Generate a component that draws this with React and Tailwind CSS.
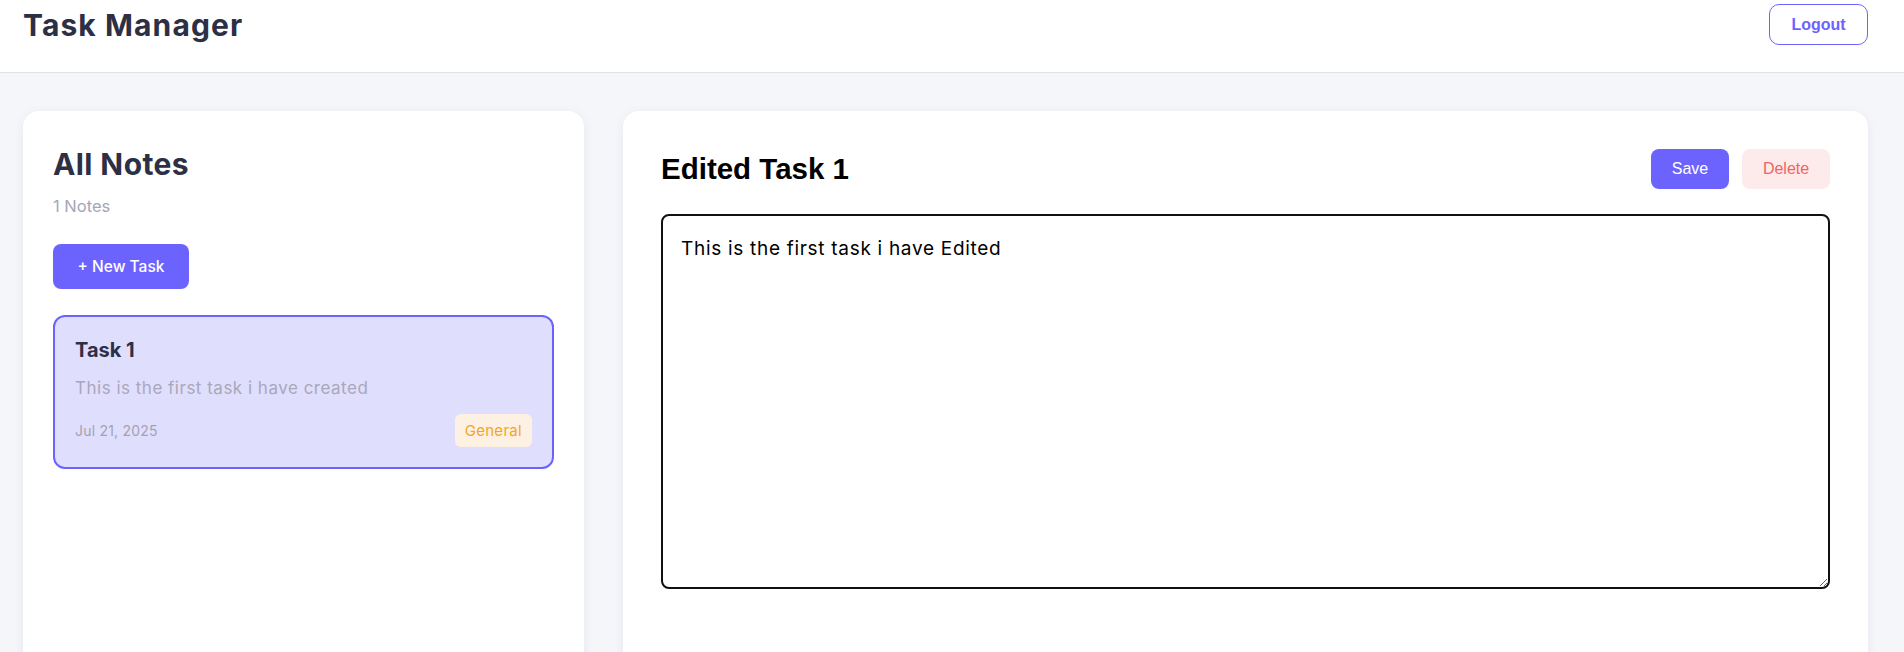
import React from "react";

const sans = "font-['Inter','Noto_Sans',sans-serif]";
const arial = "font-['Liberation_Sans',Arial,sans-serif]";

const NoteCard = ({ title, body, date, tag }) => {
  return (
    <div className="rounded-xl border-2 border-[#6c63ff] bg-[#e0defd] px-5 pt-[18px] pb-[20px]">
      <h3 className="text-[20px] leading-[30px] font-bold text-[#2d2f45]">{title}</h3>
      <p className="mt-[11px] text-[17px] leading-6 tracking-[0.5px] text-[#a9a7bb]">{body}</p>
      <div className="mt-[14px] flex items-center justify-between">
        <span className="text-[14px] tracking-[0.2px] text-[#a3a2b3]">{date}</span>
        <span className="rounded-md bg-[#fdf1e3] px-[10px] py-[6px] text-[15px] leading-[21px] tracking-[0.3px] text-[#f5a524]">
          {tag}
        </span>
      </div>
    </div>
  );
};

const App = () => {
  return (
    <div className={`min-h-screen bg-[#f5f6fa] ${sans}`}>
      <header className="flex h-[73px] items-start justify-between border-b border-[#e1e1e8] bg-white pl-[23px] pr-[36px] pt-[4px]">
        <h1 className="mt-[3px] text-[30px] leading-[36px] font-bold tracking-[1.1px] text-[#2d2f45]">Task Manager</h1>
        <button
          className={`h-[41px] w-[99px] rounded-[10px] border border-[#6c63ff] bg-white text-[16px] font-bold text-[#6c63ff] ${arial}`}
        >
          Logout
        </button>
      </header>

      <main className="grid grid-cols-[561px_1fr] gap-[39px] pl-[23px] pr-[36px] pt-[38px]">
        <section className="h-[600px] rounded-2xl bg-white px-[30px] pt-[33px] shadow-[0_2px_12px_rgba(30,30,60,0.06)]">
          <h2 className="text-[30px] leading-[40px] font-bold tracking-[0.4px] text-[#2d2f45]">All Notes</h2>
          <p className="mt-[10px] text-[16.5px] leading-6 text-[#a5a6b8]">1 Notes</p>
          <button className="mt-[26px] h-[45px] w-[136px] rounded-lg bg-[#6c63ff] text-[15.5px] font-medium text-white">
            + New Task
          </button>
          <div className="mt-[26px]">
            <NoteCard
              title="Task 1"
              body="This is the first task i have created"
              date="Jul 21, 2025"
              tag="General"
            />
          </div>
        </section>

        <section className="h-[600px] rounded-2xl bg-white px-[38px] pt-[38px] shadow-[0_2px_12px_rgba(30,30,60,0.06)]">
          <div className="flex items-center justify-between">
            <h2 className={`text-[29.5px] leading-10 font-bold text-black ${arial}`}>Edited Task 1</h2>
            <div className={`flex items-center gap-[13px] ${arial}`}>
              <button className="h-10 w-[78px] rounded-lg bg-[#6c63ff] text-[16px] text-white">Save</button>
              <button className="h-10 w-[88px] rounded-lg bg-[#fdeaea] text-[16px] text-[#ef6565]">Delete</button>
            </div>
          </div>
          <textarea
            className="mt-[25px] block h-[375px] w-full resize-y rounded-lg border-2 border-[#111] px-[18px] pt-[19px] pb-4 text-[19px] leading-7 tracking-[0.7px] text-black outline-none"
            defaultValue="This is the first task i have Edited"
          />
        </section>
      </main>
    </div>
  );
};

export default App;
